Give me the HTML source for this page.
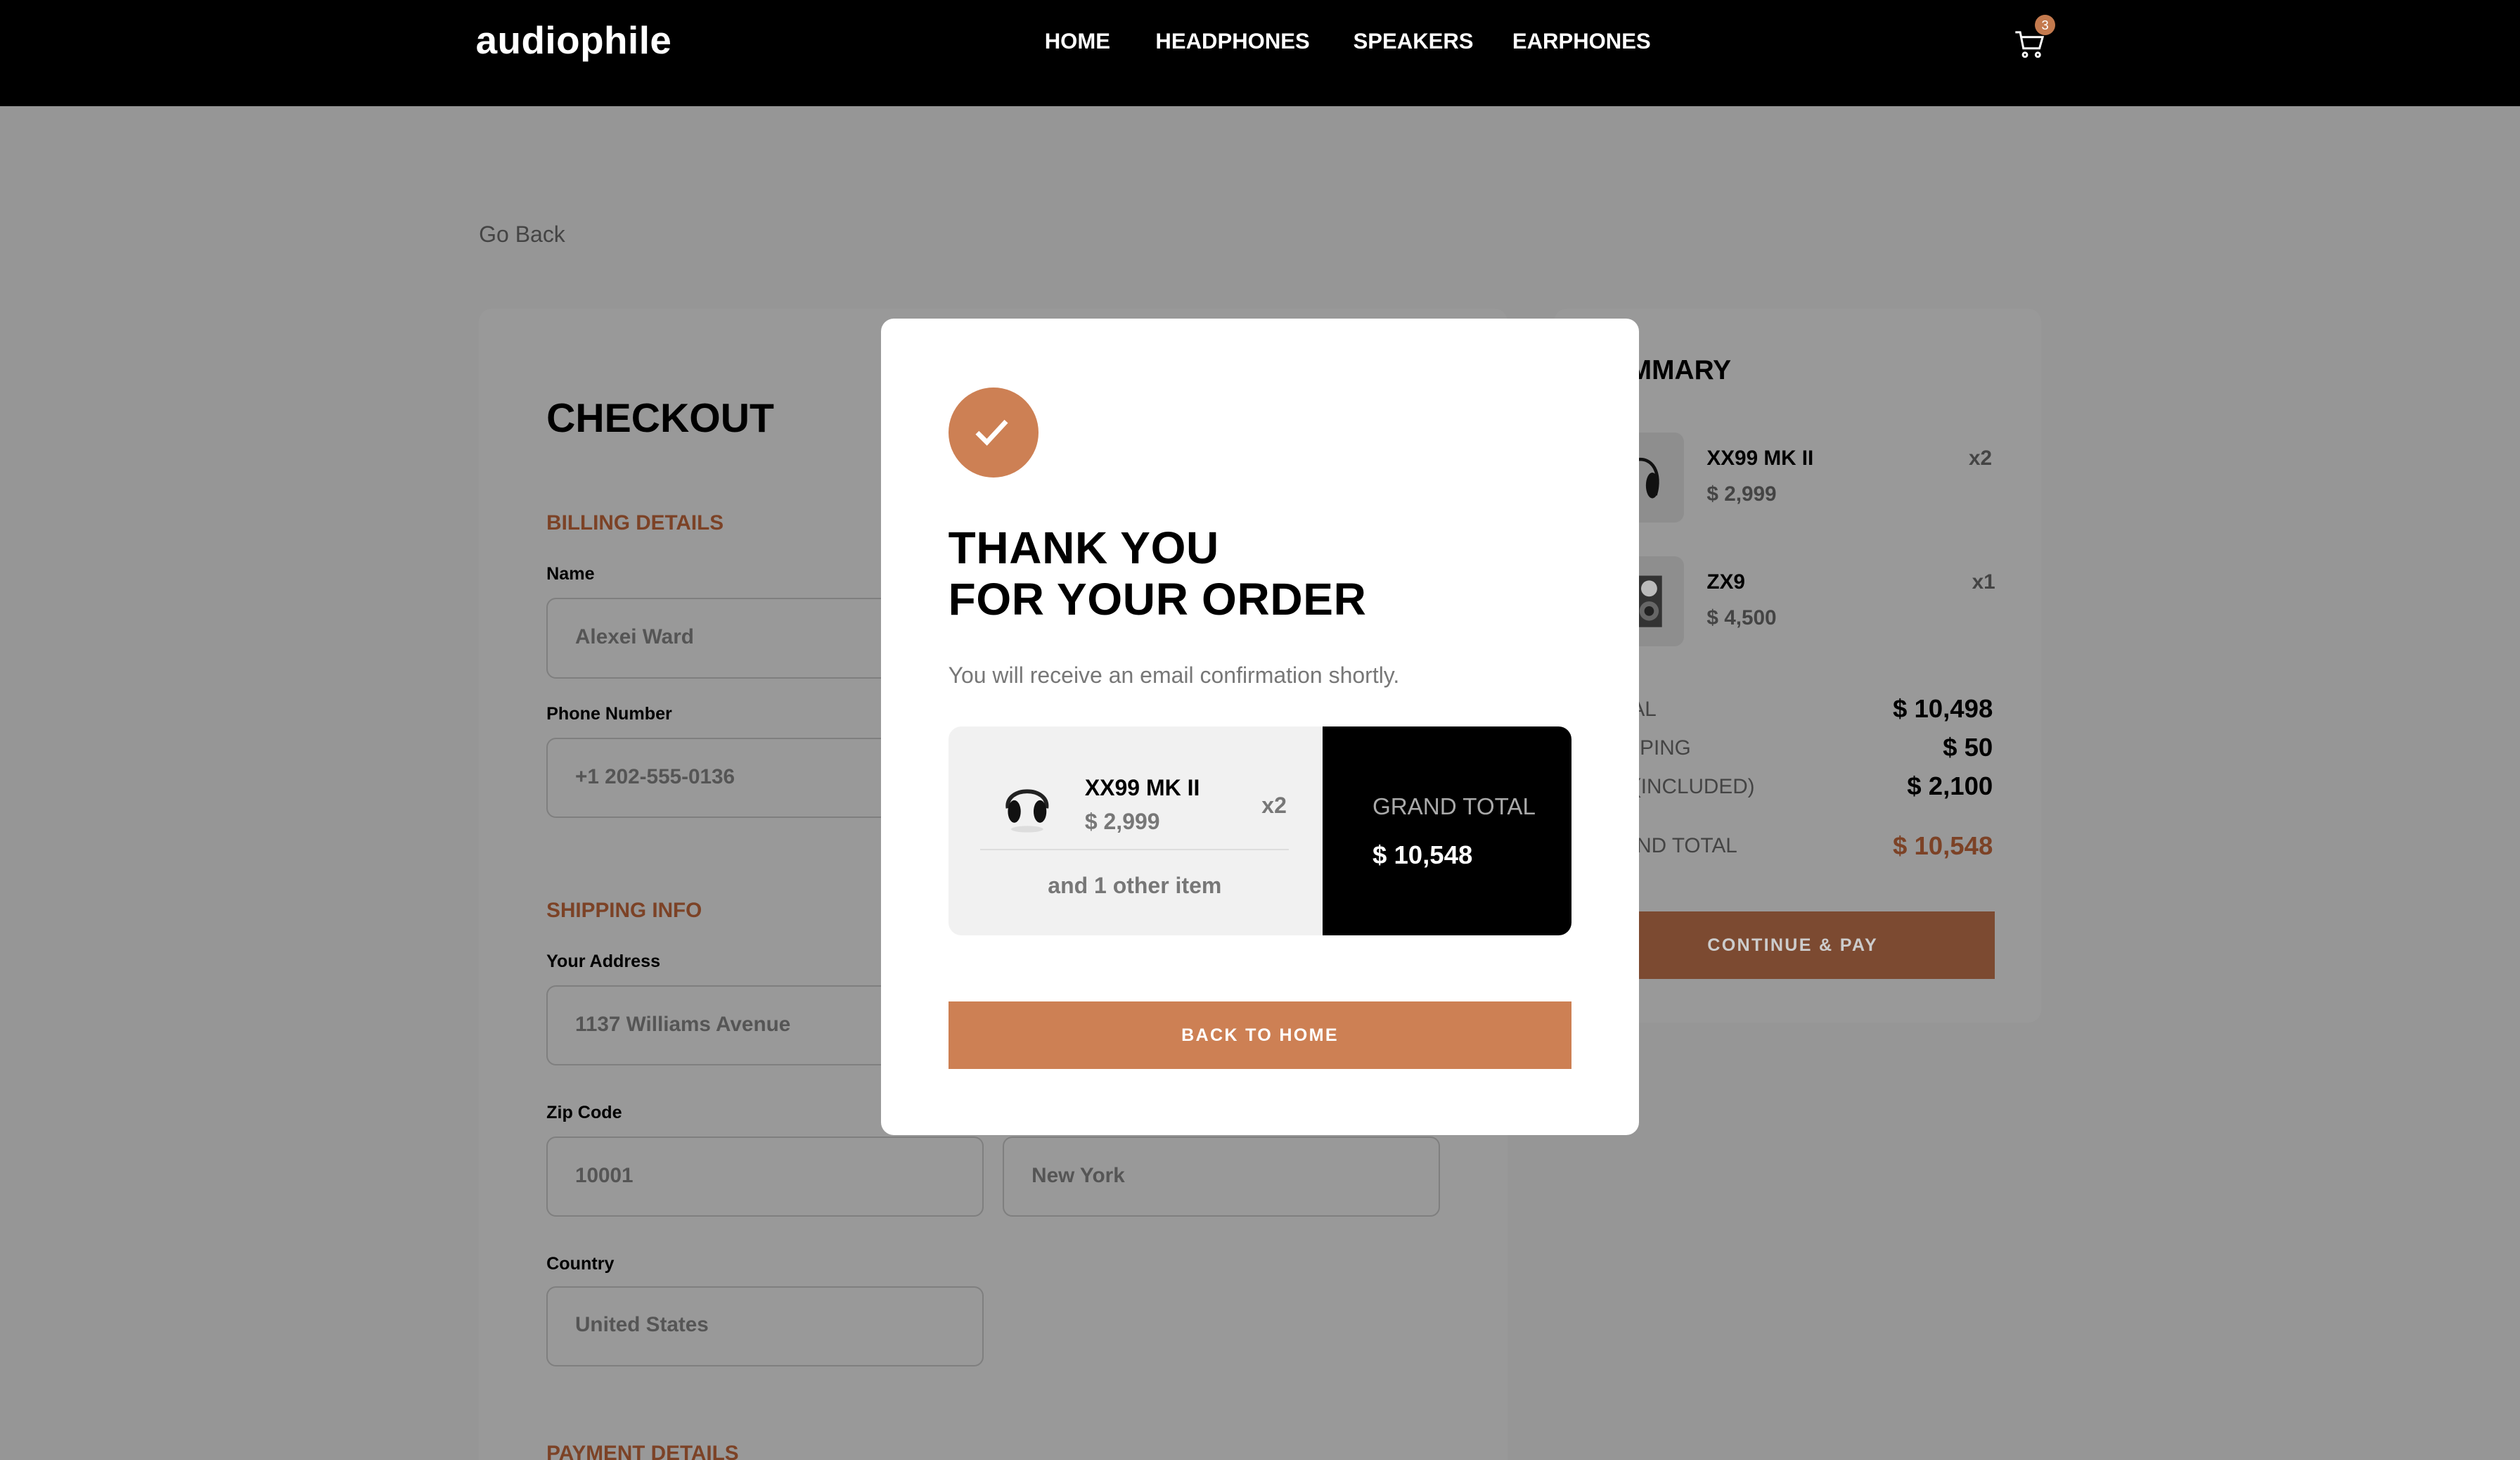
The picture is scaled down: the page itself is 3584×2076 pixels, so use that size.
<!DOCTYPE html>
<html><head><meta charset="utf-8"><style>
html,body{margin:0;padding:0}
html{width:3584px;height:2076px;overflow:hidden;background:#969696}
body{zoom:2.285714;width:1568px;height:908px;position:relative;font-family:"Liberation Sans",sans-serif;overflow:hidden}
.abs{position:absolute}
.nav{left:0;top:0;width:1568px;height:66px;background:#000}
.logo{left:296px;top:11px;color:#fff;font-weight:bold;font-size:24px;letter-spacing:0.2px}
.nav a{position:absolute;top:18px;color:#fff;font-weight:bold;font-size:13.6px;text-decoration:none}
.panel{background:#999;border-radius:8px}
.lbl{font-size:11px;font-weight:bold;color:#000}
.inp{border:1px solid #7f7f7f;border-radius:6px;height:50px;box-sizing:border-box;color:#555;font-size:13px;font-weight:bold;padding:16px 17px;background:#999}
.sec{color:#7c4226;font-size:13px;font-weight:bold}
.modal{left:548px;top:198px;width:472px;height:508px;background:#fff;border-radius:8px}
</style></head><body>
<div class="abs nav"></div>
<div class="abs logo">audiophile</div>
<div class="nav"><a style="left:650px">HOME</a><a style="left:719px">HEADPHONES</a><a style="left:842px">SPEAKERS</a><a style="left:941px">EARPHONES</a></div>
<svg class="abs" style="left:1253px;top:17px" width="20" height="20" viewBox="0 0 20 20" fill="none" stroke="#fff" stroke-width="1.3"><path d="M1 3h3l2 10h10l2-7H5"/><circle cx="7" cy="17" r="1.3"/><circle cx="15" cy="17" r="1.3"/></svg>
<div class="abs" style="left:1266px;top:9px;width:13px;height:13px;border-radius:50%;background:#c47a4e;color:#fff;font-size:8px;text-align:center;line-height:13px">3</div>

<div class="abs" style="left:298px;top:138px;font-size:14px;color:#444">Go Back</div>

<div class="abs panel" style="left:298px;top:192px;width:640px;height:730px"></div>
<div class="abs" style="left:340px;top:246px;font-size:25px;font-weight:bold;color:#000">CHECKOUT</div>
<div class="abs sec" style="left:340px;top:318px">BILLING DETAILS</div>
<div class="abs lbl" style="left:340px;top:351px">Name</div>
<div class="abs inp" style="left:340px;top:372px;width:272px">Alexei Ward</div>
<div class="abs lbl" style="left:340px;top:438px">Phone Number</div>
<div class="abs inp" style="left:340px;top:459px;width:272px">+1 202-555-0136</div>
<div class="abs sec" style="left:340px;top:559px">SHIPPING INFO</div>
<div class="abs lbl" style="left:340px;top:592px">Your Address</div>
<div class="abs inp" style="left:340px;top:613px;width:556px">1137 Williams Avenue</div>
<div class="abs lbl" style="left:340px;top:686px">Zip Code</div>
<div class="abs inp" style="left:340px;top:707px;width:272px">10001</div>
<div class="abs inp" style="left:624px;top:707px;width:272px">New York</div>
<div class="abs lbl" style="left:340px;top:780px">Country</div>
<div class="abs inp" style="left:340px;top:800px;width:272px">United States</div>
<div class="abs sec" style="left:340px;top:897px">PAYMENT DETAILS</div>

<div class="abs panel" style="left:967px;top:192px;width:303px;height:444px"></div>
<div class="abs" style="left:990px;top:221px;font-size:17px;font-weight:bold;color:#000">SUMMARY</div>
<div class="abs" style="left:990px;top:269px;width:58px;height:56px;background:#8e8e8e;border-radius:6px"></div>
<div class="abs" style="left:990px;top:346px;width:58px;height:56px;background:#8e8e8e;border-radius:6px"></div>
<svg class="abs" style="left:1014px;top:280px" width="24" height="36" viewBox="0 0 24 36"><path d="M4 6C14 4 20 14 16 28" fill="none" stroke="#111" stroke-width="2"/><ellipse cx="14" cy="22" rx="4" ry="8" fill="#111"/></svg>
<svg class="abs" style="left:1014px;top:356px" width="22" height="36" viewBox="0 0 22 36"><rect x="4" y="2" width="16" height="32" fill="#333"/><circle cx="12" cy="10" r="5" fill="#bbb"/><circle cx="12" cy="24" r="6" fill="#666"/><circle cx="12" cy="24" r="3" fill="#222"/></svg>
<div class="abs" style="left:1062px;top:278px;font-size:13px;font-weight:bold">XX99 MK II</div>
<div class="abs" style="left:1062px;top:300px;font-size:13px;font-weight:bold;color:#444">$ 2,999</div>
<div class="abs" style="left:1225px;top:278px;font-size:13px;font-weight:bold;color:#444">x2</div>
<div class="abs" style="left:1062px;top:355px;font-size:13px;font-weight:bold">ZX9</div>
<div class="abs" style="left:1062px;top:377px;font-size:13px;font-weight:bold;color:#444">$ 4,500</div>
<div class="abs" style="left:1227px;top:355px;font-size:13px;font-weight:bold;color:#444">x1</div>
<div class="abs" style="left:990px;top:434px;font-size:13px;color:#444">TOTAL</div>
<div class="abs" style="left:990px;top:458px;font-size:13px;color:#444">SHIPPING</div>
<div class="abs" style="left:990px;top:482px;font-size:13px;color:#444">VAT (INCLUDED)</div>
<div class="abs" style="left:990px;top:519px;font-size:13px;color:#444">GRAND TOTAL</div>
<div class="abs" style="right:328px;top:432px;font-size:16px;font-weight:bold">$ 10,498</div>
<div class="abs" style="right:328px;top:456px;font-size:16px;font-weight:bold">$ 50</div>
<div class="abs" style="right:328px;top:480px;font-size:16px;font-weight:bold">$ 2,100</div>
<div class="abs" style="right:328px;top:517px;font-size:16px;font-weight:bold;color:#7c4226">$ 10,548</div>
<div class="abs" style="left:990px;top:567px;width:251px;height:42px;background:#7c4a31;color:#ccc;font-size:11px;font-weight:bold;letter-spacing:1px;text-align:center;line-height:42px">CONTINUE &amp; PAY</div>

<div class="abs modal"></div>
<div class="abs" style="left:590px;top:241px;width:56px;height:56px;border-radius:50%;background:#cd8054"></div>
<svg class="abs" style="left:605px;top:258px" width="26" height="22" viewBox="0 0 26 22"><path d="M3 11l6 6L21 4" fill="none" stroke="#fff" stroke-width="3"/></svg>
<div class="abs" style="left:590px;top:325px;font-size:28px;font-weight:bold;line-height:32px;color:#000;letter-spacing:0.3px">THANK YOU<br>FOR YOUR ORDER</div>
<div class="abs" style="left:590px;top:412px;font-size:14px;color:#777">You will receive an email confirmation shortly.</div>
<div class="abs" style="left:590px;top:452px;width:388px;height:130px;background:#f1f1f1;border-radius:8px;overflow:hidden">
 <div class="abs" style="left:233px;top:0;width:155px;height:130px;background:#000"></div>
 <div class="abs" style="left:20px;top:76px;width:192px;height:1px;background:#ddd"></div>
</div>
<svg class="abs" style="left:622px;top:481px" width="34" height="38" viewBox="0 0 34 38"><path d="M5 22C3 8 31 8 29 22" fill="none" stroke="#222" stroke-width="2.5"/><ellipse cx="9" cy="24" rx="4" ry="7" fill="#111"/><ellipse cx="25" cy="24" rx="4" ry="7" fill="#111"/><ellipse cx="17" cy="35" rx="10" ry="2" fill="#ddd"/></svg>
<div class="abs" style="left:675px;top:482px;font-size:14px;font-weight:bold">XX99 MK II</div>
<div class="abs" style="left:675px;top:503px;font-size:14px;font-weight:bold;color:#777">$ 2,999</div>
<div class="abs" style="left:785px;top:493px;font-size:14px;font-weight:bold;color:#777">x2</div>
<div class="abs" style="left:652px;top:543px;font-size:14px;font-weight:bold;color:#777">and 1 other item</div>
<div class="abs" style="left:854px;top:494px;font-size:14.5px;color:#aaa">GRAND TOTAL</div>
<div class="abs" style="left:854px;top:523px;font-size:16px;font-weight:bold;color:#fff">$ 10,548</div>
<div class="abs" style="left:590px;top:623px;width:388px;height:42px;background:#cd8054;color:#fff;font-size:11px;font-weight:bold;letter-spacing:1px;text-align:center;line-height:42px">BACK TO HOME</div>
</body></html>
